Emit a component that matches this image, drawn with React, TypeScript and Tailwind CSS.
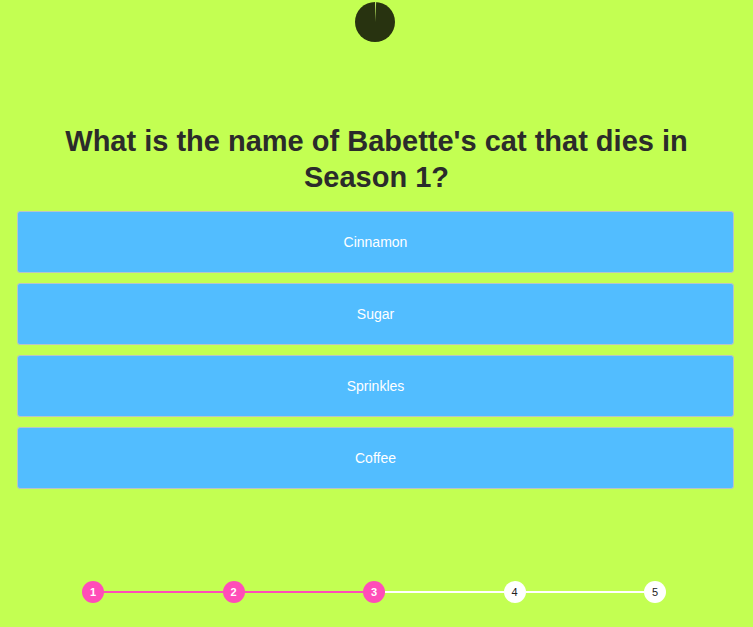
import React from "react";

const answers = ["Cinnamon", "Sugar", "Sprinkles", "Coffee"];
const steps = [1, 2, 3, 4, 5];
const current = 3;

function Timer() {
  // remaining time shown as a pie, nearly full
  return (
    <svg width="40" height="40" viewBox="0 0 40 40">
      <circle cx="20" cy="20" r="20" fill="#283310" />
      <path d="M20 20 L20 0 L21.2 0 Z" fill="#b9e861" />
    </svg>
  );
}

export default function App() {
  return (
    <div
      className="w-[753px] h-[627px] bg-[#c3ff52] flex flex-col"
      style={{ fontFamily: '"Liberation Sans", Arial, sans-serif' }}
    >
      <div className="pt-[2px] pl-[355px]">
        <Timer />
      </div>

      <h1 className="mt-[81px] px-[20px] text-center text-[29px] leading-[36px] font-bold text-[#2b2b2b]">
        What is the name of Babette's cat that dies in Season 1?
      </h1>

      <div className="mt-[16px] ml-[17px] w-[717px] flex flex-col gap-[10px]">
        {answers.map((a) => (
          <button
            key={a}
            className="h-[62px] w-full bg-[#52bdff] border border-[#b8c4c8] rounded-[3px] text-white text-[14px]"
          >
            {a}
          </button>
        ))}
      </div>

      <div className="mt-[92px] ml-[82px] w-[584px] flex items-center">
        {steps.map((s, i) => {
          const done = s <= current;
          return (
            <React.Fragment key={s}>
              {i > 0 && (
                <div
                  className={`flex-1 h-[2px] ${s <= current ? "bg-[#ff4db8]" : "bg-white"}`}
                />
              )}
              <div
                className={`w-[22px] h-[22px] rounded-full flex items-center justify-center text-[11px] ${
                  done ? "bg-[#ff4db8] text-white font-bold" : "bg-white text-[#222]"
                }`}
              >
                {s}
              </div>
            </React.Fragment>
          );
        })}
      </div>
    </div>
  );
}
